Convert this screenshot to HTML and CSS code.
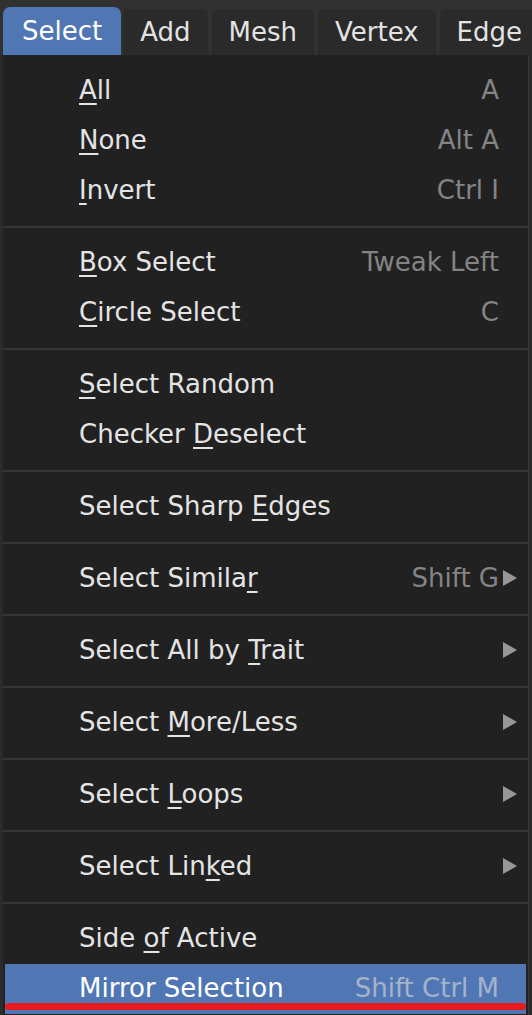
FILE: index.html
```html
<!DOCTYPE html>
<html>
<head>
<meta charset="utf-8">
<link rel="stylesheet" href="styles.css">
</head>
<body>
<div class="screen">
  <div class="header">
    <div class="tab active">Select</div>
    <div class="tab">Add</div>
    <div class="tab">Mesh</div>
    <div class="tab">Vertex</div>
    <div class="tab">Edge</div>
  </div>
  <div class="menu">
    <div class="row"><span class="label"><u>A</u>ll</span><span class="key">A</span></div>
    <div class="row"><span class="label"><u>N</u>one</span><span class="key">Alt A</span></div>
    <div class="row"><span class="label"><u>I</u>nvert</span><span class="key">Ctrl I</span></div>
    <div class="sep"></div>
    <div class="row"><span class="label"><u>B</u>ox Select</span><span class="key">Tweak Left</span></div>
    <div class="row"><span class="label"><u>C</u>ircle Select</span><span class="key">C</span></div>
    <div class="sep"></div>
    <div class="row"><span class="label"><u>S</u>elect Random</span></div>
    <div class="row"><span class="label">Checker <u>D</u>eselect</span></div>
    <div class="sep"></div>
    <div class="row"><span class="label">Select Sharp <u>E</u>dges</span></div>
    <div class="sep"></div>
    <div class="row"><span class="label">Select Simila<u>r</u></span><span class="key">Shift G</span><span class="sub"><svg viewBox="0 0 14 16" width="14" height="16"><path d="M0 0 L14 8 L0 16 Z"/></svg></span></div>
    <div class="sep"></div>
    <div class="row"><span class="label">Select All by <u>T</u>rait</span><span class="sub"><svg viewBox="0 0 14 16" width="14" height="16"><path d="M0 0 L14 8 L0 16 Z"/></svg></span></div>
    <div class="sep"></div>
    <div class="row"><span class="label">Select <u>M</u>ore/Less</span><span class="sub"><svg viewBox="0 0 14 16" width="14" height="16"><path d="M0 0 L14 8 L0 16 Z"/></svg></span></div>
    <div class="sep"></div>
    <div class="row"><span class="label">Select <u>L</u>oops</span><span class="sub"><svg viewBox="0 0 14 16" width="14" height="16"><path d="M0 0 L14 8 L0 16 Z"/></svg></span></div>
    <div class="sep"></div>
    <div class="row"><span class="label">Select Lin<u>k</u>ed</span><span class="sub"><svg viewBox="0 0 14 16" width="14" height="16"><path d="M0 0 L14 8 L0 16 Z"/></svg></span></div>
    <div class="sep"></div>
    <div class="row"><span class="label">Side <u>o</u>f Active</span></div>
    <div class="row hl"><span class="label">Mirror Selection</span><span class="key">Shift Ctrl M</span></div>
  </div>
</div>
</body>
</html>
```
FILE: styles.css
```css
html, body {
  margin: 0;
  padding: 0;
  background: #2b2b2b;
}
.screen {
  width: 532px;
  height: 1015px;
  overflow: hidden;
  font-family: "DejaVu Sans", sans-serif;
  font-size: 26px;
  background: #2b2b2b;
}
.header {
  height: 55px;
  background: #313131;
  display: flex;
  align-items: flex-end;
  padding-left: 3px;
  gap: 4px;
  white-space: nowrap;
}
.tab {
  flex: none;
  height: 46px;
  line-height: 46px;
  padding: 0 17px;
  background: #2a2a2a;
  color: #e3e3e3;
  border-radius: 5px 5px 0 0;
}
.tab.active {
  height: 48px;
  line-height: 49px;
  padding: 0 19px;
  background: #5077b4;
  color: #ffffff;
  border-radius: 7px 7px 0 0;
  margin-right: -2px;
}
.menu {
  margin-left: 3px;
  width: 521px;
  padding: 11px 2px 0;
  background: #212121;
  border-right: 1px solid #363636;
  height: 960px;
}
.row {
  position: relative;
  box-sizing: border-box;
  height: 50px;
  display: flex;
  align-items: center;
  padding: 0 27px 2px 74px;
  color: #e4e4e4;
  white-space: nowrap;
}
.label {
  flex: 1;
}
.label u {
  text-decoration-thickness: 1.5px;
  text-underline-offset: 4px;
}
.key {
  color: #848484;
}
.sub {
  display: flex;
  width: 14px;
  margin-left: 4px;
  margin-right: -18px;
}
.sub svg {
  fill: #989898;
}
.sep {
  height: 22px;
  margin: 0 -2px;
  display: flex;
  align-items: center;
}
.sep::before {
  content: "";
  display: block;
  width: 100%;
  height: 2px;
  background: #363636;
}
.row.hl {
  background: #5077b4;
  color: #ffffff;
}
.row.hl .key {
  color: #a3b3cb;
}
.row.hl::after {
  content: "";
  position: absolute;
  left: 0;
  right: 0;
  top: 39px;
  height: 7px;
  border-radius: 4px;
  background: #e61a1e;
}
```
